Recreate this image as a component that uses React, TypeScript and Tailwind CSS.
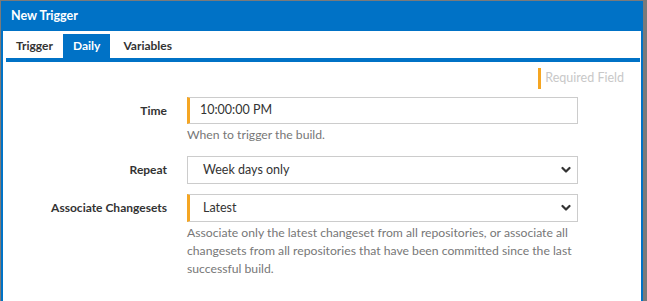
import React from 'react';

const font = { fontFamily: 'Lato, "Open Sans", sans-serif' };

function Chevron() {
  return (
    <svg className="w-[10px] h-[8px]" viewBox="0 0 10 8" fill="none">
      <polyline points="1.5,2 5,5.5 8.5,2" stroke="#333" strokeWidth={2.2} strokeLinecap="round" strokeLinejoin="round" />
    </svg>
  );
}

function Row({ label, children, help, className = '' }: { label: string; children: React.ReactNode; help?: React.ReactNode; className?: string }) {
  return (
    <div className={`flex ${className}`}>
      <div className="w-[161px] shrink-0 h-[28px] flex items-center justify-end text-[12px] font-bold text-[#333]">
        {label}
      </div>
      <div className="ml-[20px] w-[391px]">
        {children}
        {help && <div className="mt-[2px] text-[12.2px] leading-[18px] text-[#777]">{help}</div>}
      </div>
    </div>
  );
}

export default function App() {
  return (
    <div className="w-[647px] h-[301px] bg-[#7a7a7a] pt-px pl-px pr-[4px] overflow-hidden" style={font}>
      <div className="h-[310px] bg-[#0072c6] px-[2px]">
        <div className="h-[30px] flex items-center pl-[8px] text-white text-[12.5px] font-bold">New Trigger</div>
        <div className="h-[280px] bg-white pl-[3px] pr-px pt-[3px]">
          {/* Tabs */}
          <div className="flex h-[24px] text-[12px]">
            <div className="px-[10px] flex items-center font-bold text-[#333]">Trigger</div>
            <div className="px-[10px] flex items-center font-bold text-white bg-[#0072c6]">Daily</div>
            <div className="px-[13px] flex items-center font-bold text-[#333]">Variables</div>
          </div>
          <div className="h-[4px] bg-[#0072c6]" />

          <div className="flex justify-end pr-[16px] mt-[6px]">
            <div className="h-[21px] border-l-[3px] border-[#f5a623] pl-[4px] flex items-center text-[12.5px] text-[#c8c8c8]">
              Required Field
            </div>
          </div>

          <Row label="Time" className="mt-[8px]" help="When to trigger the build.">
            <div className="h-[27px] border border-[#ccc] border-l-[3px] border-l-[#f5a623] flex items-center pl-[10px] text-[12.5px] text-[#333]">
              10:00:00 PM
            </div>
          </Row>

          <Row label="Repeat" className="mt-[12px]">
            <div className="h-[28px] border border-[#ccc] flex items-center justify-between pl-[15px] pr-[6px] text-[12.5px] text-[#333]">
              <span>Week days only</span>
              <Chevron />
            </div>
          </Row>

          <Row
            label="Associate Changesets"
            className="mt-[10px]"
            help="Associate only the latest changeset from all repositories, or associate all changesets from all repositories that have been committed since the last successful build."
          >
            <div className="h-[28px] border border-[#ccc] border-l-[3px] border-l-[#f5a623] flex items-center justify-between pl-[13px] pr-[6px] text-[12.5px] text-[#333]">
              <span>Latest</span>
              <Chevron />
            </div>
          </Row>
        </div>
      </div>
    </div>
  );
}
